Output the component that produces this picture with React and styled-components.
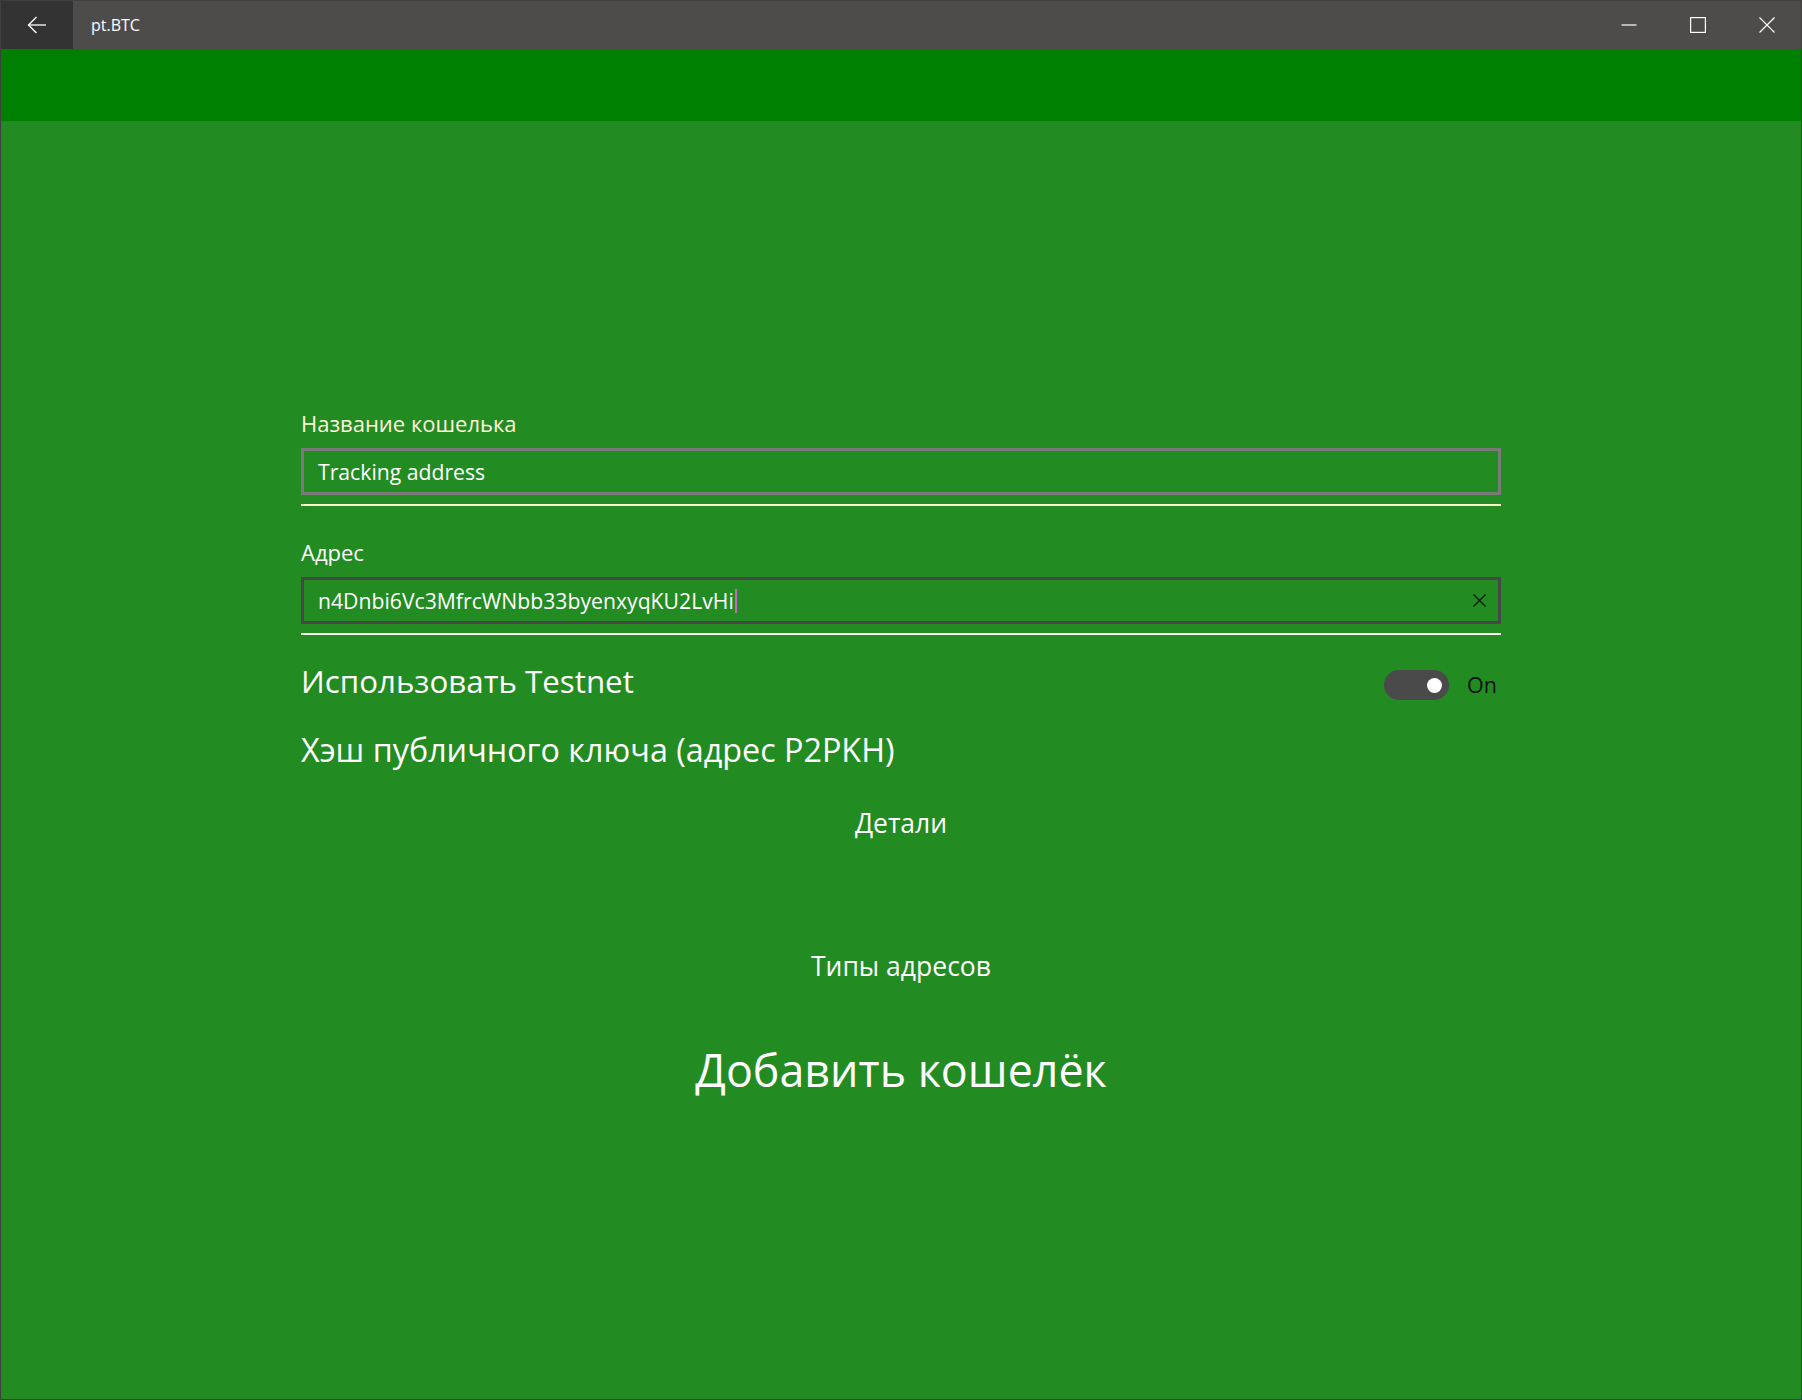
import React from 'react';
import styled, { createGlobalStyle } from 'styled-components';

const GlobalStyle = createGlobalStyle`
  html, body {
    margin: 0;
    padding: 0;
    background: #228b22;
  }
  body {
    font-family: 'Open Sans', 'Noto Sans', sans-serif;
  }
`

const Window = styled.div`
  width: 1802px;
  height: 1400px;
  box-sizing: border-box;
  border: 1px solid #404040;
  display: flex;
  flex-direction: column;
  background: #228b22;
  overflow: hidden;
`

const TitleBar = styled.header`
  height: 48px;
  flex-shrink: 0;
  display: flex;
  align-items: stretch;
  background: #4d4c4b;
`

const BackButton = styled.button`
  width: 72px;
  border: 0;
  padding: 0;
  background: #333333;
  display: flex;
  align-items: center;
  justify-content: center;
`

const AppTitle = styled.span`
  align-self: center;
  margin-left: 18px;
  color: #ffffff;
  font-size: 16px;
  line-height: 22px;
`

const Spacer = styled.div`
  flex: 1;
`

const CaptionButton = styled.button`
  width: 69px;
  border: 0;
  padding: 0;
  background: transparent;
  display: flex;
  align-items: center;
  justify-content: center;
`

const CommandBand = styled.div`
  height: 72px;
  flex-shrink: 0;
  background: #008000;
`

const Content = styled.main`
  width: 1200px;
  margin: 0 auto;
  padding-top: 288px;
  display: flex;
  flex-direction: column;
`

const Field = styled.div`
  display: flex;
  flex-direction: column;
  margin-top: ${props => props.$gap || 0}px;
`

const FieldLabel = styled.label`
  color: ${props => props.$color || '#ffffff'};
  font-size: 22px;
  line-height: 28px;
  margin-bottom: 11px;
`

const InputBox = styled.div`
  height: 47px;
  box-sizing: border-box;
  border: 3px solid ${props => (props.$focused ? '#474747' : '#7a7a7a')};
  display: flex;
  align-items: center;
  padding-left: 14px;
`

const InputText = styled.span`
  flex: 1;
  color: #ffffff;
  font-size: 21.2px;
  line-height: 28px;
  display: flex;
  align-items: center;
`

const Caret = styled.span`
  display: inline-block;
  width: 2px;
  height: 24px;
  margin-left: 1px;
  background: #c266c8;
`

const ClearButton = styled.button`
  width: 38px;
  height: 100%;
  border: 0;
  padding: 0;
  background: transparent;
  display: flex;
  align-items: center;
  justify-content: center;
`

const Underline = styled.div`
  height: 2px;
  margin-top: 9px;
  background: ${props => props.$color || '#ffffff'};
`

const ToggleRow = styled.div`
  margin-top: 24px;
  height: 44px;
  display: flex;
  align-items: center;
  justify-content: space-between;
`

const SectionTitle = styled.div`
  color: #ffffff;
  font-size: ${props => props.$size || 32}px;
  line-height: 44px;
  margin-top: ${props => props.$gap || 0}px;
`

const Toggle = styled.div`
  display: flex;
  align-items: center;
  gap: 18px;
  padding-right: 4px;
  margin-top: 8px;
`

const Track = styled.div`
  width: 65px;
  height: 30px;
  box-sizing: border-box;
  border-radius: 15px;
  background: #4a4a4a;
  display: flex;
  align-items: center;
  justify-content: ${props => (props.$on ? 'flex-end' : 'flex-start')};
  padding: 0 7px;
`

const Knob = styled.div`
  width: 15px;
  height: 15px;
  border-radius: 50%;
  background: #ffffff;
`

const ToggleState = styled.span`
  color: #111111;
  font-size: 21.5px;
  line-height: 28px;
`

const LinkButton = styled.button`
  align-self: center;
  border: 0;
  padding: 0 8px;
  background: transparent;
  color: #ffffff;
  font-family: inherit;
  font-size: ${props => props.$size}px;
  line-height: ${props => props.$line}px;
  margin-top: ${props => props.$gap}px;
`

const BackIcon = () => (
  <svg width="20" height="18" viewBox="0 0 20 18" fill="none" stroke="#ffffff" strokeWidth="1.3">
    <path d="M1.5 9 H19" />
    <path d="M9.5 1 L1.5 9 L9.5 17" />
  </svg>
)

const MinimizeIcon = () => (
  <svg width="16" height="16" viewBox="0 0 16 16" fill="none" stroke="#ffffff" strokeWidth="1.2">
    <path d="M0.5 8 H15.5" />
  </svg>
)

const MaximizeIcon = () => (
  <svg width="16" height="16" viewBox="0 0 16 16" fill="none" stroke="#ffffff" strokeWidth="1.2">
    <rect x="0.6" y="0.6" width="14.8" height="14.8" />
  </svg>
)

const CloseIcon = ({ color = '#ffffff', size = 16, width = 1.2 }) => (
  <svg width={size} height={size} viewBox="0 0 16 16" fill="none" stroke={color} strokeWidth={width}>
    <path d="M0.5 0.5 L15.5 15.5 M15.5 0.5 L0.5 15.5" />
  </svg>
)

const App = () => {
  return (
    <Window>
      <GlobalStyle />
      <TitleBar>
        <BackButton aria-label="Back">
          <BackIcon />
        </BackButton>
        <AppTitle>pt.BTC</AppTitle>
        <Spacer />
        <CaptionButton aria-label="Minimize">
          <MinimizeIcon />
        </CaptionButton>
        <CaptionButton aria-label="Maximize">
          <MaximizeIcon />
        </CaptionButton>
        <CaptionButton aria-label="Close">
          <CloseIcon />
        </CaptionButton>
      </TitleBar>
      <CommandBand />
      <Content>
        <Field>
          <FieldLabel $color="#fff8dc">Название кошелька</FieldLabel>
          <InputBox>
            <InputText>Tracking address</InputText>
          </InputBox>
          <Underline $color="#fffacd" />
        </Field>
        <Field $gap={32}>
          <FieldLabel>Адрес</FieldLabel>
          <InputBox $focused>
            <InputText>
              n4Dnbi6Vc3MfrcWNbb33byenxyqKU2LvHi
              <Caret />
            </InputText>
            <ClearButton aria-label="Clear">
              <CloseIcon color="#111111" size={13} width={1.6} />
            </ClearButton>
          </InputBox>
          <Underline $color="#fffff0" />
        </Field>
        <ToggleRow>
          <SectionTitle $size={31.3}>Использовать Testnet</SectionTitle>
          <Toggle>
            <Track $on>
              <Knob />
            </Track>
            <ToggleState>On</ToggleState>
          </Toggle>
        </ToggleRow>
        <SectionTitle $size={32.3} $gap={24}>Хэш публичного ключа (адрес P2PKH)</SectionTitle>
        <LinkButton $size={26.5} $line={36} $gap={34}>Детали</LinkButton>
        <LinkButton $size={26.5} $line={36} $gap={107}>Типы адресов</LinkButton>
        <LinkButton $size={44.8} $line={60} $gap={56}>Добавить кошелёк</LinkButton>
      </Content>
    </Window>
  );
};

export default App;
